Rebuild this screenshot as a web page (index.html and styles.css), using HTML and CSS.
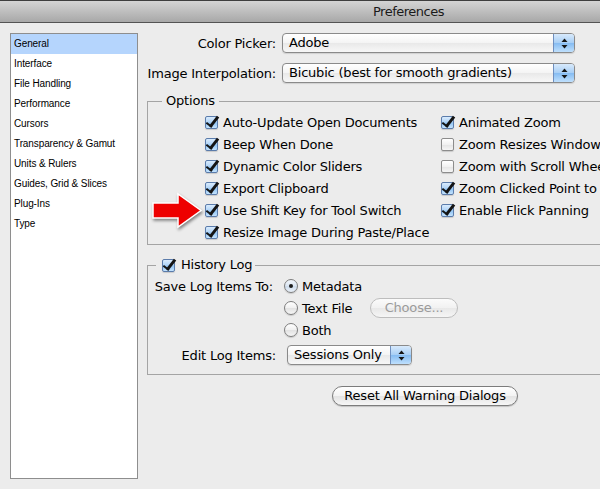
FILE: index.html
```html
<!DOCTYPE html>
<html>
<head>
<meta charset="utf-8">
<title>Preferences</title>
<link rel="stylesheet" href="styles.css">
</head>
<body>
<div class="window">
  <div class="titlebar"><span class="title">Preferences</span></div>
  <div class="content">
    <ul class="sidebar">
      <li class="selected">General</li>
      <li>Interface</li>
      <li>File Handling</li>
      <li>Performance</li>
      <li>Cursors</li>
      <li>Transparency &amp; Gamut</li>
      <li>Units &amp; Rulers</li>
      <li>Guides, Grid &amp; Slices</li>
      <li>Plug-Ins</li>
      <li>Type</li>
    </ul>
    <div class="main">
      <div class="form-row">
        <span class="lbl">Color Picker:</span>
        <div class="popup wide"><span class="popup-text">Adobe</span><span class="stepper"><svg width="7" height="11" viewBox="0 0 7 11"><polygon points="0.5,4 3.5,0.5 6.5,4"/><polygon points="0.5,7 3.5,10.5 6.5,7"/></svg></span></div>
      </div>
      <div class="form-row">
        <span class="lbl">Image Interpolation:</span>
        <div class="popup wide"><span class="popup-text">Bicubic (best for smooth gradients)</span><span class="stepper"><svg width="7" height="11" viewBox="0 0 7 11"><polygon points="0.5,4 3.5,0.5 6.5,4"/><polygon points="0.5,7 3.5,10.5 6.5,7"/></svg></span></div>
      </div>

      <fieldset class="group options">
        <legend class="legend-opts">Options</legend>
        <div class="opts">
          <div class="col col1">
            <div class="chk-row"><span class="cb on"></span>Auto-Update Open Documents</div>
            <div class="chk-row"><span class="cb on"></span>Beep When Done</div>
            <div class="chk-row"><span class="cb on"></span>Dynamic Color Sliders</div>
            <div class="chk-row"><span class="cb on"></span>Export Clipboard</div>
            <div class="chk-row"><span class="cb on"></span>Use Shift Key for Tool Switch</div>
            <div class="chk-row"><span class="cb on"></span>Resize Image During Paste/Place</div>
          </div>
          <div class="col col2">
            <div class="chk-row"><span class="cb on"></span>Animated Zoom</div>
            <div class="chk-row"><span class="cb"></span>Zoom Resizes Windows</div>
            <div class="chk-row"><span class="cb"></span>Zoom with Scroll Wheel</div>
            <div class="chk-row"><span class="cb on"></span>Zoom Clicked Point to Center</div>
            <div class="chk-row"><span class="cb on"></span>Enable Flick Panning</div>
          </div>
        </div>
      </fieldset>

      <fieldset class="group history">
        <legend class="legend-hist"><span class="cb on"></span>History Log</legend>
        <div class="hist">
          <span class="hlbl save">Save Log Items To:</span>
          <div class="radio-row"><span class="radio on"></span>Metadata</div>
          <span></span>
          <div class="radio-row"><span class="radio"></span><span class="radio-text">Text File</span><span class="btn-choose">Choose...</span></div>
          <span></span>
          <div class="radio-row"><span class="radio"></span>Both</div>
          <span class="hlbl edit">Edit Log Items:</span>
          <div class="edit-row"><div class="popup narrow"><span class="popup-text">Sessions Only</span><span class="stepper"><svg width="7" height="11" viewBox="0 0 7 11"><polygon points="0.5,4 3.5,0.5 6.5,4"/><polygon points="0.5,7 3.5,10.5 6.5,7"/></svg></span></div></div>
        </div>
      </fieldset>

      <div class="reset-row"><span class="btn-reset">Reset All Warning Dialogs</span></div>
    </div>
  </div>
  <svg class="arrow" width="60" height="46" viewBox="0 0 60 46"><polygon points="5,15 30,15 30,6 53,22.5 30,39 30,30 5,30" fill="#ee0000" stroke="#ffffff" stroke-width="1.5" stroke-linejoin="miter"/></svg>
</div>
</body>
</html>
```

FILE: styles.css
```css
html, body {
  margin: 0;
  padding: 0;
}
body {
  width: 600px;
  height: 489px;
  overflow: hidden;
  background: #ececec;
  font-family: "DejaVu Sans", sans-serif;
  font-size: 13px;
  letter-spacing: -0.2px;
  color: #000;
}
.window {
  position: relative;
  height: 489px;
}
.titlebar {
  height: 21px;
  border-top: 1px solid #3e3e3e;
  border-bottom: 1px solid #545454;
  background: linear-gradient(#d4d4d4, #a8a8a8);
  box-sizing: content-box;
}
.title {
  display: block;
  padding-left: 373px;
  font-size: 13px;
  letter-spacing: -0.5px;
  line-height: 21px;
  color: #1a1a1a;
}
.content {
  display: flex;
  align-items: flex-start;
}
.sidebar {
  list-style: none;
  margin: 10px 0 0 10px;
  padding: 0;
  width: 126px;
  height: 444px;
  border: 1px solid #8e8e8e;
  background: #fff;
  font-family: "Liberation Sans", sans-serif;
  font-size: 10px;
  letter-spacing: -0.1px;
  flex: none;
}
.sidebar li {
  height: 20px;
  line-height: 19px;
  padding-left: 3px;
}
.sidebar li.selected {
  background: #b5d5fd;
}
.main {
  margin-left: 9px;
  width: 470px;
  flex: none;
}
.form-row {
  display: flex;
  align-items: center;
  height: 20px;
  margin-top: 10px;
}
.lbl {
  width: 129px;
  margin-right: 6px;
  display: flex;
  justify-content: flex-end;
  white-space: nowrap;
  flex: none;
}
.popup {
  display: flex;
  height: 20px;
  box-sizing: border-box;
  border: 1px solid #8a8a8a;
  border-radius: 4px;
  background: linear-gradient(#ffffff, #f4f4f4 50%, #e9e9e9 52%, #f7f7f7);
  box-shadow: 0 1px 1px rgba(0, 0, 0, 0.12);
  overflow: hidden;
  flex: none;
}
.popup-text {
  flex: 1;
  padding-left: 6px;
  line-height: 18px;
  white-space: nowrap;
}
.stepper {
  width: 20px;
  border-left: 1px solid #6f8fbf;
  background: linear-gradient(#d8eafc, #a9cff5 48%, #86bcf2 52%, #bfe0fd);
  display: flex;
  align-items: center;
  justify-content: center;
}
.stepper svg polygon {
  fill: #151515;
}
.wide {
  width: 293px;
}
.narrow {
  width: 125px;
}
.group {
  margin: 10px 0 0 0;
  padding: 0;
  border: 1px solid #a4a4a4;
  min-width: 0;
  width: 470px;
  box-sizing: border-box;
}
.legend-opts {
  margin-left: 14px;
  padding: 0 4px;
  line-height: 16px;
  height: 16px;
}
.opts {
  display: flex;
  padding: 2px 0 1px 57px;
  overflow: hidden;
}
.col1 {
  width: 236px;
  flex: none;
}
.col2 {
  flex: none;
}
.chk-row {
  display: flex;
  align-items: center;
  height: 22px;
  white-space: nowrap;
}
.cb {
  position: relative;
  box-sizing: border-box;
  width: 13px;
  height: 13px;
  margin-right: 5px;
  flex: none;
  border: 1px solid #8c8c8c;
  border-radius: 2px;
  background: linear-gradient(#ffffff, #f1f1f1 50%, #e4e4e4 52%, #f6f6f6);
  box-shadow: 0 1px 1px rgba(0, 0, 0, 0.15);
}
.cb.on {
  border-color: #5b7cab;
  background: linear-gradient(#d9ebfd, #b0d4f7 48%, #8fc3f3 52%, #c4e3fe);
}
.cb.on::after {
  content: "";
  position: absolute;
  left: 3px;
  top: -3px;
  width: 4px;
  height: 11px;
  border-right: 3px solid #141414;
  border-bottom: 2.5px solid #141414;
  transform: rotate(38deg);
}
.history {
  margin-top: 12px;
}
.legend-hist {
  display: flex;
  align-items: center;
  margin-left: 8px;
  padding: 0 3px 0 6px;
  line-height: 16px;
  height: 16px;
}
.legend-hist .cb {
  margin-right: 6px;
}
.hist {
  display: grid;
  grid-template-columns: 128px auto;
  column-gap: 8px;
  padding: 2px 0 9px 0;
  align-items: center;
}
.hlbl {
  text-align: right;
  white-space: nowrap;
}
.hlbl.save {
  padding-right: 3px;
}
.radio-row {
  display: flex;
  align-items: center;
  height: 22px;
  white-space: nowrap;
}
.radio {
  position: relative;
  box-sizing: border-box;
  width: 14px;
  height: 14px;
  margin-right: 4px;
  border-radius: 50%;
  border: 1px solid #7d7d7d;
  background: linear-gradient(#ffffff, #f0f0f0 50%, #e2e2e2 52%, #f6f6f6);
  box-shadow: 0 1px 1px rgba(0, 0, 0, 0.15);
  flex: none;
}
.radio.on {
  background: linear-gradient(#f2f6fb, #dbe6f2 50%, #cddcec 52%, #e9f0f8);
}
.radio.on::after {
  content: "";
  position: absolute;
  left: 4px;
  top: 4px;
  width: 4px;
  height: 4px;
  border-radius: 50%;
  background: #1d1d1d;
}
.radio-text {
  width: 68px;
}
.btn-choose {
  box-sizing: border-box;
  width: 88px;
  height: 20px;
  line-height: 18px;
  border: 1px solid #bdbdbd;
  border-radius: 10px;
  background: linear-gradient(#fbfbfb, #f1f1f1 50%, #e8e8e8 52%, #f5f5f5);
  color: #9b9b9b;
  text-align: center;
}
.edit-row {
  margin-top: 4px;
  padding-left: 3px;
  height: 20px;
}
.hlbl.edit {
  margin-top: 4px;
}
.reset-row {
  margin-top: 11px;
  padding-left: 185px;
}
.btn-reset {
  display: block;
  box-sizing: border-box;
  width: 186px;
  height: 20px;
  line-height: 18px;
  border: 1px solid #7c7c7c;
  border-radius: 10px;
  background: linear-gradient(#ffffff, #f3f3f3 50%, #e4e4e4 52%, #f6f6f6);
  box-shadow: 0 1px 1px rgba(0, 0, 0, 0.18);
  text-align: center;
  white-space: nowrap;
}
.arrow {
  position: absolute;
  left: 148px;
  top: 188px;
  filter: drop-shadow(1px 2px 1.5px rgba(0, 0, 0, 0.45));
}
```
